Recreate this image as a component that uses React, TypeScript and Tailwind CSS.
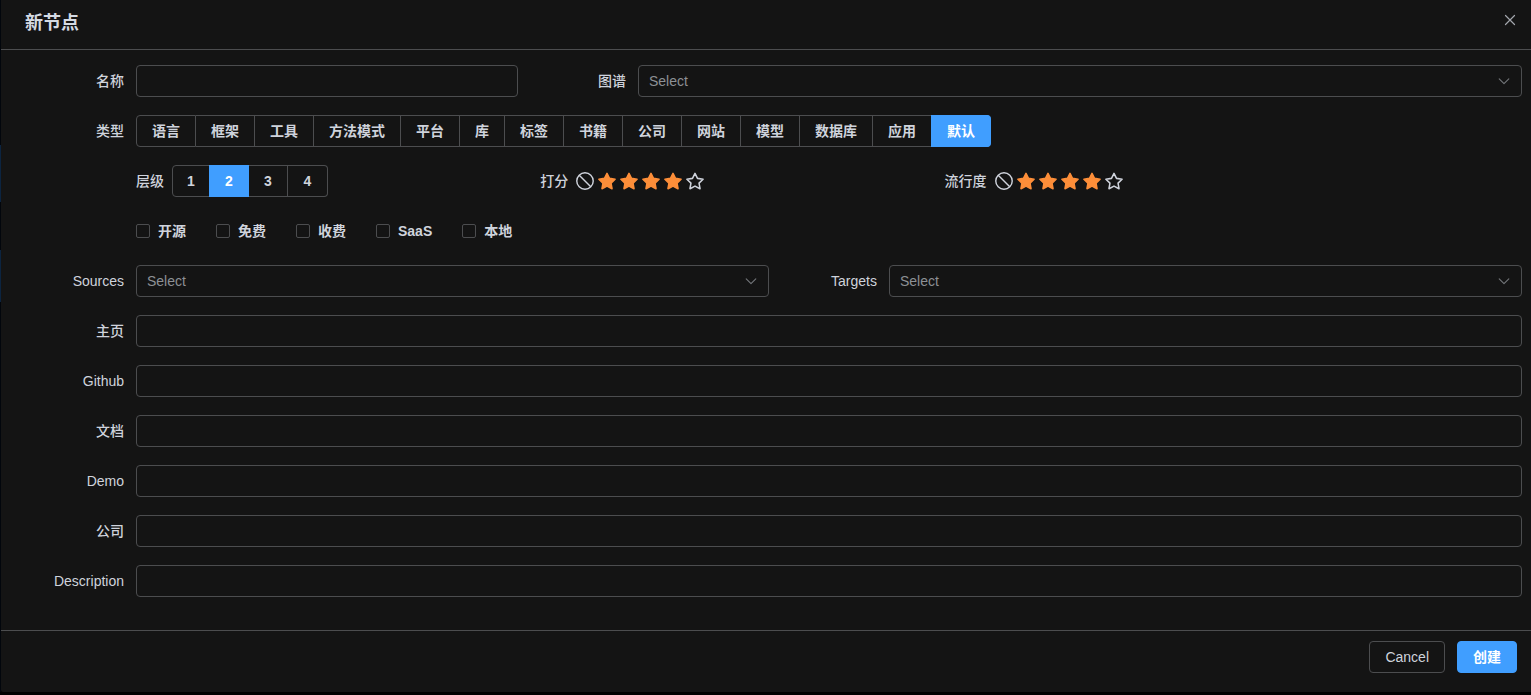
import { useState, type ReactNode } from "react";

const TYPES = ["语言", "框架", "工具", "方法模式", "平台", "库", "标签", "书籍", "公司", "网站", "模型", "数据库", "应用", "默认"];
const LEVELS = ["1", "2", "3", "4"];
const FLAGS = ["开源", "免费", "收费", "SaaS", "本地"];
const LINKS = ["主页", "Github", "文档", "Demo", "公司", "Description"];

const STAR = "M7 1.1 8.95 4.95 13.3 5.6 10.15 8.67 10.9 13 7 10.95 3.1 13 3.85 8.67 .7 5.6 5.05 4.95Z";
const FIELD = "h-8 w-full min-w-0 rounded border border-[#4c4d4f] bg-transparent px-2.5 text-sm outline-none focus:border-[#409eff]";

function Field({ id, label, children }: { id: string; label: string; children: ReactNode }) {
  return (
    <div className="flex min-w-0">
      <label htmlFor={id} className="w-30 shrink-0 pr-3 text-right leading-8">
        {label}
      </label>
      <div className="min-w-0 flex-1">{children}</div>
    </div>
  );
}

function Select({ id }: { id: string }) {
  return (
    <div className="relative">
      <select id={id} defaultValue="" className={`${FIELD} appearance-none text-[#8d9095]`}>
        <option value="">Select</option>
      </select>
      <svg
        viewBox="0 0 14 14"
        className="pointer-events-none absolute top-1/2 right-[11px] size-3.5 -translate-y-1/2 fill-none stroke-[#73767a]"
        strokeWidth="1.1"
        strokeLinecap="round"
        strokeLinejoin="round"
      >
        <path d="M2.2 4.8 7 9.6 11.8 4.8" />
      </svg>
    </div>
  );
}

function RadioGroup({ name, options, initial, sizing }: { name: string; options: string[]; initial: string; sizing: string }) {
  const [value, setValue] = useState(initial);
  return (
    <div role="radiogroup" aria-label={name} className="flex">
      {options.map((option) => (
        <label
          key={option}
          className={`relative flex h-8 cursor-pointer items-center justify-center border-y border-r border-[#4c4d4f] first:rounded-l first:border-l last:rounded-r has-checked:border-[#409eff] has-checked:bg-[#409eff] has-checked:text-white has-checked:shadow-[-1px_0_0_0_#409eff] ${sizing}`}
        >
          <input
            type="radio"
            name={name}
            className="sr-only"
            checked={value === option}
            onChange={() => setValue(option)}
          />
          {option}
        </label>
      ))}
    </div>
  );
}

function Rating({ label }: { label: string }) {
  const [score, setScore] = useState(4);
  return (
    <div role="group" aria-label={label} className="flex w-7/24 items-center gap-2">
      <span>{label}</span>
      <div className="flex gap-1">
        <button type="button" aria-label="0" onClick={() => setScore(0)}>
          <svg viewBox="0 0 14 14" className="size-4.5 fill-none stroke-[#cfd3dc]" strokeWidth="1.1">
            <circle cx="7" cy="7" r="6.4" />
            <path d="M2.5 2.5 11.5 11.5" />
          </svg>
        </button>
        {[1, 2, 3, 4, 5].map((n) => (
          <button key={n} type="button" aria-label={String(n)} onClick={() => setScore(n)}>
            <svg
              viewBox="0 0 14 14"
              className={n <= score ? "size-4.5 fill-[#fd8e39] stroke-[#fd8e39]" : "size-4.5 fill-none stroke-[#cfd3dc]"}
              strokeWidth="1.2"
              strokeLinejoin="round"
            >
              <path d={STAR} />
            </svg>
          </button>
        ))}
      </div>
    </div>
  );
}

export default function App() {
  return (
    <div className="flex min-h-screen bg-black pb-[3px] font-['Liberation_Sans','Noto_Sans_CJK_SC',sans-serif] text-sm text-[#cfd3dc]">
      <div aria-hidden="true" className="flex w-px flex-col bg-[#02060c]">
        <div className="mt-[145px] h-[57px] bg-[#0c2440]" />
        <div className="mt-12 h-[52px] bg-[#0c2440]" />
      </div>
      <form className="flex flex-1 flex-col rounded-bl-xs bg-[#141414]" onSubmit={(e) => e.preventDefault()}>
        <header className="flex h-[50px] shrink-0 items-start justify-between border-b border-[#4c4d4f] pr-[13px] pl-6">
          <h1 className="pt-[9px] text-lg leading-7 font-bold text-[#d5dae3]">新节点</h1>
          <button type="button" aria-label="Close" className="mt-3">
            <svg viewBox="0 0 16 16" className="size-4 fill-none stroke-[#a3a6ad]" strokeWidth="1.2" strokeLinecap="round">
              <path d="M3.5 3.5 12.5 12.5M12.5 3.5 3.5 12.5" />
            </svg>
          </button>
        </header>

        <main className="flex flex-col gap-[18px] pt-[15px] pr-[9px] pb-[33px] pl-[15px] font-medium">
          <div className="grid grid-cols-3">
            <Field id="name" label="名称">
              <input id="name" type="text" className={FIELD} />
            </Field>
            <div className="col-span-2">
              <Field id="graph" label="图谱">
                <Select id="graph" />
              </Field>
            </div>
          </div>

          <div className="flex">
            <span className="w-30 shrink-0 pr-3 text-right leading-8">类型</span>
            <RadioGroup name="类型" options={TYPES} initial="默认" sizing="px-[15px] font-bold" />
          </div>

          <div className="flex h-8 pl-30">
            <div className="flex w-7/24 items-center gap-2">
              <span>层级</span>
              <RadioGroup name="层级" options={LEVELS} initial="2" sizing="w-[39px] first:w-[38px] last:w-10 font-bold" />
            </div>
            <Rating label="打分" />
            <Rating label="流行度" />
          </div>

          <div className="flex h-8 items-center gap-[30px] pl-30">
            {FLAGS.map((flag) => (
              <label key={flag} className="flex cursor-pointer items-center gap-2 font-semibold">
                <input
                  type="checkbox"
                  className="size-3.5 appearance-none rounded-xs border border-[#4c4d4f] checked:border-[#409eff] checked:bg-[#409eff]"
                />
                {flag}
              </label>
            ))}
          </div>

          <div className="grid grid-cols-2">
            <Field id="sources" label="Sources">
              <Select id="sources" />
            </Field>
            <Field id="targets" label="Targets">
              <Select id="targets" />
            </Field>
          </div>

          {LINKS.map((label, i) => (
            <Field key={label} id={`link-${i}`} label={label}>
              <input id={`link-${i}`} type="text" className={FIELD} />
            </Field>
          ))}
        </main>

        <footer className="flex justify-end gap-3 border-t border-[#4c4d4f] pt-2.5 pr-3.5 pb-[19px] font-medium">
          <button type="button" className="h-8 rounded border border-[#4c4d4f] px-[15px]">
            Cancel
          </button>
          <button type="submit" className="h-8 rounded border border-[#409eff] bg-[#409eff] px-[15px] font-bold text-white">
            创建
          </button>
        </footer>
      </form>
    </div>
  );
}
